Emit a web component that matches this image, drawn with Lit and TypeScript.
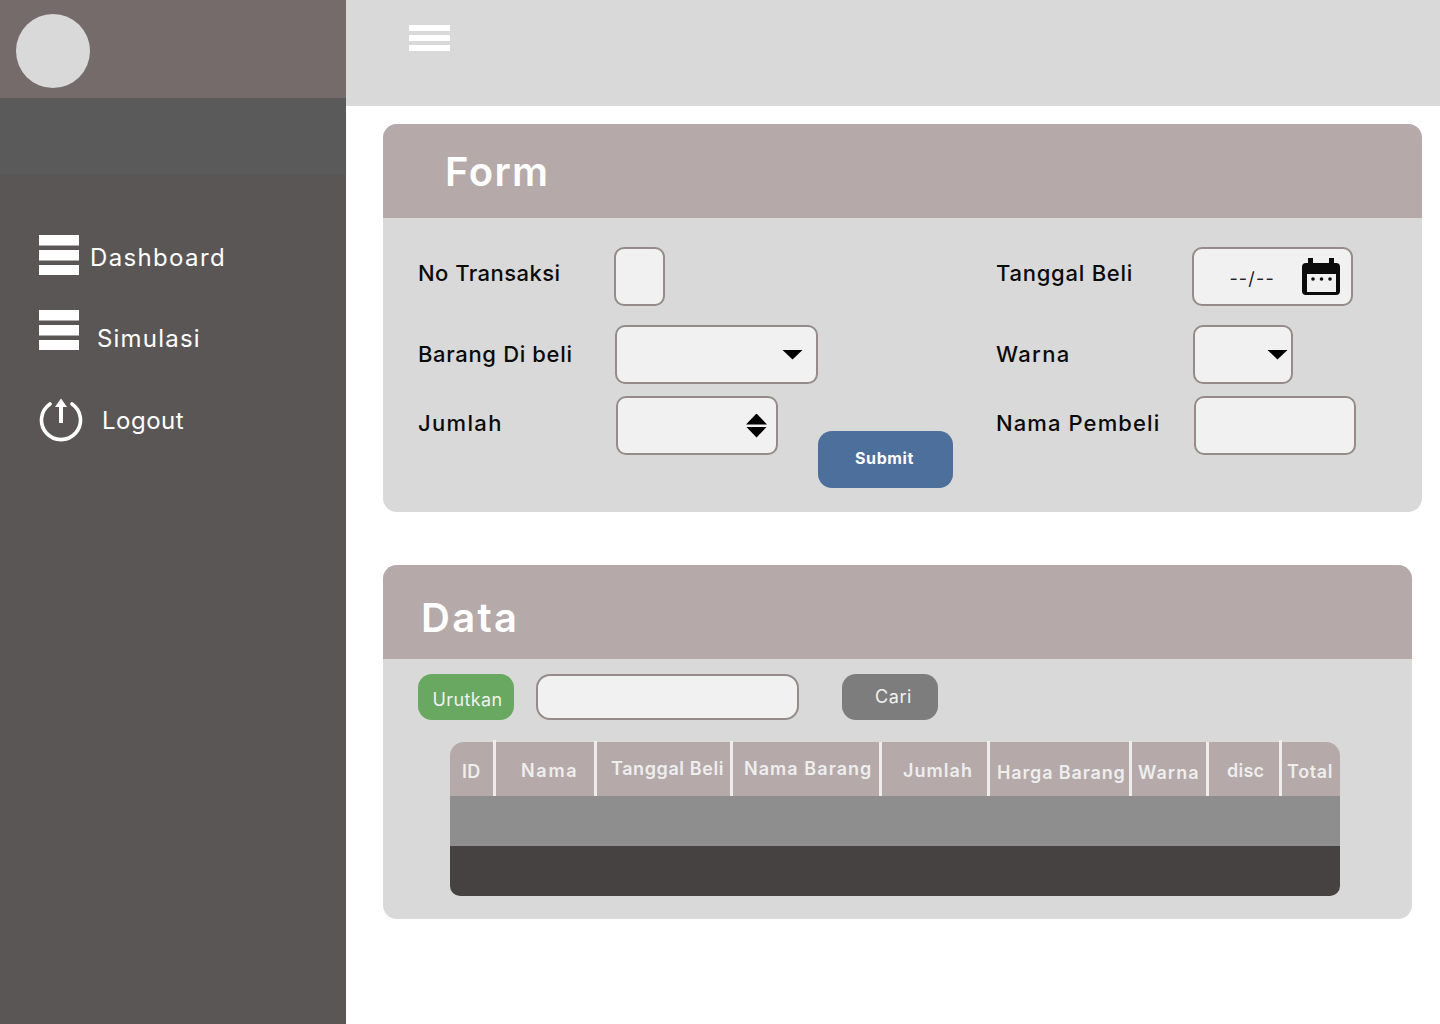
import { LitElement, css, html, svg } from "lit";
import { customElement } from "lit/decorators.js";

interface TableColumn {
  label: string;
  width: number;
  indent: number;
  offset: number; // text centre relative to the middle of the header
  rise: number; // how far the divider sticks out above the header
  spacing: number;
}

const COLUMNS: TableColumn[] = [
  { label: "ID", width: 46, indent: 12, offset: 2, rise: 2, spacing: 0.25 },
  { label: "Nama", width: 101, indent: 25, offset: 1, rise: 1, spacing: 1.7 },
  { label: "Tanggal Beli", width: 136, indent: 14, offset: -1, rise: 1, spacing: 0.6 },
  { label: "Nama Barang", width: 149, indent: 11, offset: -1, rise: 0, spacing: 1.05 },
  { label: "Jumlah", width: 108, indent: 21, offset: 1, rise: 1, spacing: 1.05 },
  { label: "Harga Barang", width: 142, indent: 7, offset: 3, rise: 1, spacing: 0.85 },
  { label: "Warna", width: 77, indent: 6, offset: 3, rise: 0, spacing: 1.05 },
  { label: "disc", width: 73, indent: 18, offset: 1, rise: 2, spacing: 0.25 },
  { label: "Total", width: 58, indent: 5, offset: 2, rise: 1, spacing: 0.65 }
];

const menuIcon = svg`<svg class="menu-icon" viewBox="0 0 40 40" aria-hidden="true">
  <rect x="0" y="0" width="40" height="10.5" fill="#fff" />
  <rect x="0" y="15" width="40" height="10.5" fill="#fff" />
  <rect x="0" y="30" width="40" height="10" fill="#fff" />
</svg>`;

const powerIcon = svg`<svg class="power-icon" viewBox="0 0 44 44" aria-hidden="true">
  <path d="M11 6 A19.5 19.5 0 1 0 33 6" fill="none" stroke="#fff" stroke-width="3.6" stroke-linecap="round" />
  <path d="M22 25 V6" fill="none" stroke="#fff" stroke-width="4" />
  <path d="M22 0.5 L28 9 H16 Z" fill="#fff" />
</svg>`;

const calendarIcon = svg`<svg class="calendar-icon" viewBox="0 0 38 38" aria-hidden="true">
  <path d="M6 0 H11 V5 H27 V0 H32 V5 H34 A4 4 0 0 1 38 9 V33 A4 4 0 0 1 34 37 H4 A4 4 0 0 1 0 33 V9 A4 4 0 0 1 4 5 H6 Z" fill="#0b0b0b" />
  <rect x="5" y="16" width="29" height="18" fill="#f1f1f1" />
  <circle cx="11" cy="21" r="1.8" fill="#0b0b0b" />
  <circle cx="19.5" cy="21" r="1.8" fill="#0b0b0b" />
  <circle cx="28" cy="21" r="1.8" fill="#0b0b0b" />
</svg>`;

@customElement("app-root")
export class AppRoot extends LitElement {
  static override styles = css`
    :host {
      display: block;
      font-family: Inter, "Liberation Sans", sans-serif;
      color: #0b0b0b;
      background: #fff;
    }

    * {
      box-sizing: border-box;
    }

    .page {
      display: grid;
      grid-template-columns: 346px 1fr;
      min-height: 1024px;
    }

    .sidebar {
      background: #5a5656;
      color: #fff;
    }

    .profile {
      height: 98px;
      padding: 14px 16px;
      background: #746b6a;
    }

    .avatar {
      width: 74px;
      height: 74px;
      border-radius: 50%;
      background: #d9d9d9;
    }

    .band {
      height: 77px;
      background: #5a5a5a;
    }

    .nav {
      display: flex;
      flex-direction: column;
      padding: 60px 0 0 39px;
    }

    .nav-item {
      display: flex;
      align-items: center;
      height: 40px;
      font-size: 24px;
    }

    .nav-item.simulasi {
      margin-top: 35px;
    }

    .nav-item.logout {
      height: 44px;
      margin-top: 48px;
    }

    .menu-icon {
      display: block;
      width: 40px;
      height: 40px;
    }

    .power-icon {
      display: block;
      width: 44px;
      height: 44px;
    }

    .dashboard span {
      margin-left: 11px;
      padding-top: 4px;
      letter-spacing: 1.35px;
    }

    .simulasi span {
      margin-left: 18px;
      padding-top: 16px;
      letter-spacing: 1.2px;
    }

    .logout span {
      margin-left: 19px;
      letter-spacing: 0.5px;
    }

    .main {
      display: flex;
      flex-direction: column;
      align-items: flex-start;
    }

    .topbar {
      align-self: stretch;
      height: 106px;
      padding: 25px 0 0 63px;
      background: #d9d9d9;
    }

    .burger {
      display: flex;
      flex-direction: column;
      gap: 4px;
      width: 41px;
    }

    .burger i {
      display: block;
      height: 6px;
      background: #fff;
    }

    .card {
      margin-left: 37px;
      border-radius: 14px;
      background: #d9d9d9;
      overflow: hidden;
    }

    .form-card {
      width: 1039px;
      margin-top: 18px;
    }

    .data-card {
      width: 1029px;
      margin-top: 53px;
    }

    .card-head {
      display: flex;
      align-items: center;
      height: 94px;
      background: #b5a9a9;
      color: #fff;
      font-size: 40px;
      font-weight: 600;
    }

    .form-card .card-head {
      padding: 1px 0 0 62px;
      letter-spacing: 1.4px;
    }

    .data-card .card-head {
      padding: 10px 0 0 38px;
      letter-spacing: 2.3px;
    }

    .form-body {
      display: flex;
      flex-direction: column;
      padding: 29px 0 24px 35px;
    }

    .row {
      display: grid;
      grid-template-columns: 578px 1fr;
    }

    .row + .row {
      margin-top: 19px;
    }

    .row.last {
      margin-top: 12px;
    }

    .cell {
      display: flex;
      align-items: center;
    }

    .row.last .cell {
      align-items: flex-start;
    }

    label {
      flex: none;
      width: 197px;
      padding-bottom: 2px;
      font-size: 22px;
      font-weight: 500;
    }

    .row.first label {
      padding-bottom: 8px;
    }

    .row.last label {
      padding: 14px 0 0;
    }

    .ls-no {
      letter-spacing: 0.45px;
    }

    .ls-tanggal {
      letter-spacing: 0.75px;
    }

    .ls-barang {
      letter-spacing: 0.65px;
    }

    .ls-short {
      letter-spacing: 1.35px;
    }

    .ls-nama {
      letter-spacing: 1.1px;
    }

    .field {
      display: flex;
      align-items: center;
      justify-content: flex-end;
      height: 59px;
      border: 2px solid #968b8b;
      border-radius: 10px;
      background: #f1f1f1;
    }

    input.field {
      padding: 0 10px;
      font: inherit;
    }

    .f-no {
      width: 51px;
      margin-left: -1px;
    }

    .f-barang {
      width: 203px;
      padding-right: 13px;
    }

    .f-jumlah {
      width: 162px;
      margin-left: 1px;
      padding-right: 9px;
    }

    .f-tanggal {
      width: 161px;
      margin-left: -1px;
      padding-right: 11px;
    }

    .f-warna {
      width: 100px;
      padding-right: 3px;
    }

    .f-nama {
      width: 162px;
      margin-left: 1px;
    }

    .caret {
      width: 21px;
      height: 10px;
      background: #000;
      clip-path: polygon(0 0, 100% 0, 50% 100%);
    }

    .spinner {
      display: flex;
      flex-direction: column;
      gap: 2px;
    }

    .spinner i {
      display: block;
      width: 21px;
      height: 11px;
      background: #000;
      clip-path: polygon(0 0, 100% 0, 50% 100%);
    }

    .spinner i:first-child {
      clip-path: polygon(50% 0, 100% 100%, 0 100%);
    }

    .date-text {
      margin-right: 27px;
      padding-top: 3px;
      font-size: 18px;
      letter-spacing: 1.2px;
      color: #222;
    }

    .calendar-icon {
      display: block;
      flex: none;
      width: 38px;
      height: 38px;
    }

    .btn {
      border: none;
      font-family: inherit;
      cursor: pointer;
    }

    .submit {
      width: 135px;
      height: 57px;
      margin: 35px 0 0 40px;
      padding: 0 2px 4px 0;
      border-radius: 14px;
      background: #4d6f9c;
      color: #fff;
      font-size: 16px;
      font-weight: 700;
      letter-spacing: 0.6px;
    }

    .toolbar {
      display: flex;
      padding: 15px 0 0 35px;
    }

    .urutkan {
      width: 96px;
      height: 46px;
      padding: 4px 0 0 3px;
      border-radius: 14px;
      background: #68a860;
      color: #f1f1f1;
      font-size: 18px;
      letter-spacing: 0.4px;
    }

    .search {
      width: 263px;
      height: 46px;
      margin-left: 22px;
      border: 2px solid #968b8b;
      border-radius: 14px;
      background: #f1f1f1;
    }

    .cari {
      width: 96px;
      height: 46px;
      margin-left: 43px;
      padding: 0 0 2px 7px;
      border-radius: 14px;
      background: #7d7d7d;
      color: #f1f1f1;
      font-size: 18px;
      letter-spacing: 0.6px;
    }

    .table {
      width: 890px;
      margin: 22px 0 23px 67px;
    }

    .thead {
      display: flex;
      height: 54px;
      border-radius: 14px 14px 0 0;
      background: #b5a9a9;
    }

    .th {
      display: flex;
      align-items: center;
      flex: none;
      border-right: 3px solid #efecec;
      color: #eeeeee;
      font-size: 18px;
      font-weight: 600;
      white-space: nowrap;
    }

    .th:last-child {
      border-right: none;
    }

    .tr-mid {
      height: 50px;
      background: #8e8e8e;
    }

    .tr-dark {
      height: 50px;
      border-radius: 0 0 10px 10px;
      background: #464241;
    }
  `;

  private _headerCell(col: TableColumn) {
    const pad = 2 * col.offset + col.rise;
    const style = [
      `width:${col.width}px`,
      `margin-top:-${col.rise}px`,
      `padding-left:${col.indent}px`,
      `padding-top:${Math.max(pad, 0)}px`,
      `padding-bottom:${Math.max(-pad, 0)}px`,
      `letter-spacing:${col.spacing}px`
    ].join(";");
    return html`<div class="th" style=${style}>${col.label}</div>`;
  }

  override render() {
    return html`
      <div class="page">
        <aside class="sidebar">
          <div class="profile"><div class="avatar"></div></div>
          <div class="band"></div>
          <nav class="nav">
            <div class="nav-item dashboard">${menuIcon}<span>Dashboard</span></div>
            <div class="nav-item simulasi">${menuIcon}<span>Simulasi</span></div>
            <div class="nav-item logout">${powerIcon}<span>Logout</span></div>
          </nav>
        </aside>

        <main class="main">
          <div class="topbar">
            <div class="burger"><i></i><i></i><i></i></div>
          </div>

          <section class="card form-card">
            <div class="card-head">Form</div>
            <div class="form-body">
              <div class="row first">
                <div class="cell left">
                  <label class="ls-no">No Transaksi</label>
                  <input class="field f-no" />
                </div>
                <div class="cell right">
                  <label class="ls-tanggal">Tanggal Beli</label>
                  <div class="field f-tanggal">
                    <span class="date-text">--/--</span>
                    ${calendarIcon}
                  </div>
                </div>
              </div>
              <div class="row">
                <div class="cell left">
                  <label class="ls-barang">Barang Di beli</label>
                  <div class="field f-barang"><div class="caret"></div></div>
                </div>
                <div class="cell right">
                  <label class="ls-short">Warna</label>
                  <div class="field f-warna"><div class="caret"></div></div>
                </div>
              </div>
              <div class="row last">
                <div class="cell left">
                  <label class="ls-short">Jumlah</label>
                  <div class="field f-jumlah">
                    <div class="spinner"><i></i><i></i></div>
                  </div>
                  <button class="btn submit">Submit</button>
                </div>
                <div class="cell right">
                  <label class="ls-nama">Nama Pembeli</label>
                  <input class="field f-nama" />
                </div>
              </div>
            </div>
          </section>

          <section class="card data-card">
            <div class="card-head">Data</div>
            <div class="toolbar">
              <button class="btn urutkan">Urutkan</button>
              <input class="search" />
              <button class="btn cari">Cari</button>
            </div>
            <div class="table">
              <div class="thead">${COLUMNS.map((col) => this._headerCell(col))}</div>
              <div class="tr-mid"></div>
              <div class="tr-dark"></div>
            </div>
          </section>
        </main>
      </div>
    `;
  }
}
